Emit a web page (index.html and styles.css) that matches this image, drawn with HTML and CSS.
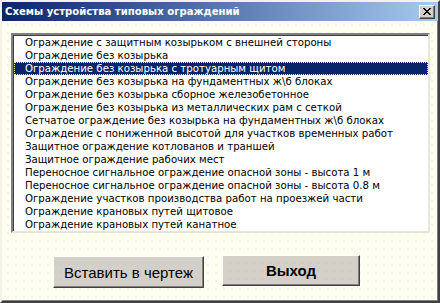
FILE: index.html
```html
<!DOCTYPE html>
<html>
<head>
<meta charset="utf-8">
<link rel="stylesheet" href="styles.css">
</head>
<body>
<div class="window">
  <div class="titlebar">
    <span class="title">Схемы устройства типовых ограждений</span>
    <button class="close" aria-label="Закрыть">
      <svg width="8" height="7" viewBox="0 0 8 7"><path d="M0 0h2v1h1v1h2V1h1V0h2v1H7v1H6v1H5v1h1v1h1v1h1v1H6V6H5V5H3v1H2v1H0V6h1V5h1V4h1V3H2V2H1V1H0z" fill="#000"/></svg>
    </button>
  </div>
  <div class="content">
    <ul class="list">
      <li>Ограждение с защитным козырьком с внешней стороны</li>
      <li>Ограждение без козырька</li>
      <li class="selected"><span>Ограждение без козырька с тротуарным щитом</span></li>
      <li>Ограждение без козырька на фундаментных ж\б блоках</li>
      <li>Ограждение без козырька сборное железобетонное</li>
      <li>Ограждение без козырька из металлических рам с сеткой</li>
      <li>Сетчатое ограждение без козырька на фундаментных ж\б блоках</li>
      <li>Ограждение с пониженной высотой для участков временных работ</li>
      <li>Защитное ограждение котлованов и траншей</li>
      <li>Защитное ограждение рабочих мест</li>
      <li>Переносное сигнальное ограждение опасной зоны - высота 1 м</li>
      <li>Переносное сигнальное ограждение опасной зоны - высота 0.8 м</li>
      <li>Ограждение участков производства работ на проезжей части</li>
      <li>Ограждение крановых путей щитовое</li>
      <li>Ограждение крановых путей канатное</li>
    </ul>
    <div class="buttons">
      <button class="btn btn-insert">Вставить в чертеж</button>
      <button class="btn btn-exit">Выход</button>
    </div>
  </div>
</div>
</body>
</html>
```

FILE: styles.css
```css
html, body {
  margin: 0;
  padding: 0;
  width: 440px;
  height: 303px;
  overflow: hidden;
  background: #fffff0;
}

.window {
  box-sizing: border-box;
  width: 440px;
  height: 303px;
  display: flex;
  flex-direction: column;
  border-top: 2px solid #f4f2e4;
  border-left: 2px solid #f4f2e4;
  border-right: 2px solid #404040;
  border-bottom: 2px solid #404040;
  box-shadow: inset -1px -1px 0 #808080;
  background-color: #ffffef;
  background-image: radial-gradient(circle, #e6eef4 0.6px, transparent 0.9px);
  background-size: 8px 8px;
  background-position: 2px 3px;
}

.titlebar {
  height: 19px;
  flex: none;
  display: flex;
  align-items: center;
  justify-content: space-between;
  padding: 0 2px 0 2px;
  background: linear-gradient(to right, #0a246a, #a6caf0);
}

.title {
  font-family: "DejaVu Sans", sans-serif;
  font-weight: bold;
  font-size: 10.1px;
  color: #fff;
  margin-left: 1px;
}

.close {
  box-sizing: border-box;
  width: 16px;
  height: 14px;
  margin: 0 1px 0 0;
  padding: 0;
  display: flex;
  align-items: center;
  justify-content: center;
  background: #d4d0c8;
  border: 1px solid;
  border-color: #fff #404040 #404040 #fff;
  box-shadow: inset -1px -1px 0 #808080;
}

.content {
  flex: 1;
  display: flex;
  flex-direction: column;
  padding: 12px 8px 0 9px;
}

.list {
  box-sizing: border-box;
  list-style: none;
  margin: 0;
  padding: 1px 0 0 0;
  height: 200px;
  background: #fff;
  border: 2px solid;
  border-color: #808080 #e8e6dc #e8e6dc #808080;
  box-shadow: inset 1px 1px 0 #404040;
  overflow: hidden;
}

.list li {
  height: 13px;
  line-height: 13px;
  padding-left: 11px;
  font-family: "DejaVu Sans", sans-serif;
  font-size: 10.2px;
  color: #000;
  white-space: nowrap;
  margin-left: 1px;
}

.list li.selected {
  background: #0a246a;
  color: #fff;
  outline: 1px dotted #ffffa0;
  outline-offset: -1px;
}

.buttons {
  display: flex;
  align-items: flex-start;
  gap: 18px;
  padding: 22px 0 0 42px;
}

.btn {
  box-sizing: border-box;
  height: 32px;
  margin: 0;
  padding: 0;
  font-family: "Liberation Sans", Arial, sans-serif;
  font-size: 15px;
  color: #000;
  background-color: #d4d0c8;
  background-image: radial-gradient(circle, #b4cce4 0.6px, transparent 0.9px);
  background-size: 8px 8px;
  background-position: 3px 3px;
  border: 1px solid;
  border-color: #fff #404040 #404040 #fff;
  box-shadow: inset -1px -1px 0 #808080;
}

.btn-insert {
  width: 151px;
  margin-top: 1px;
}

.btn-exit {
  width: 138px;
  height: 31px;
  font-weight: bold;
}
```
